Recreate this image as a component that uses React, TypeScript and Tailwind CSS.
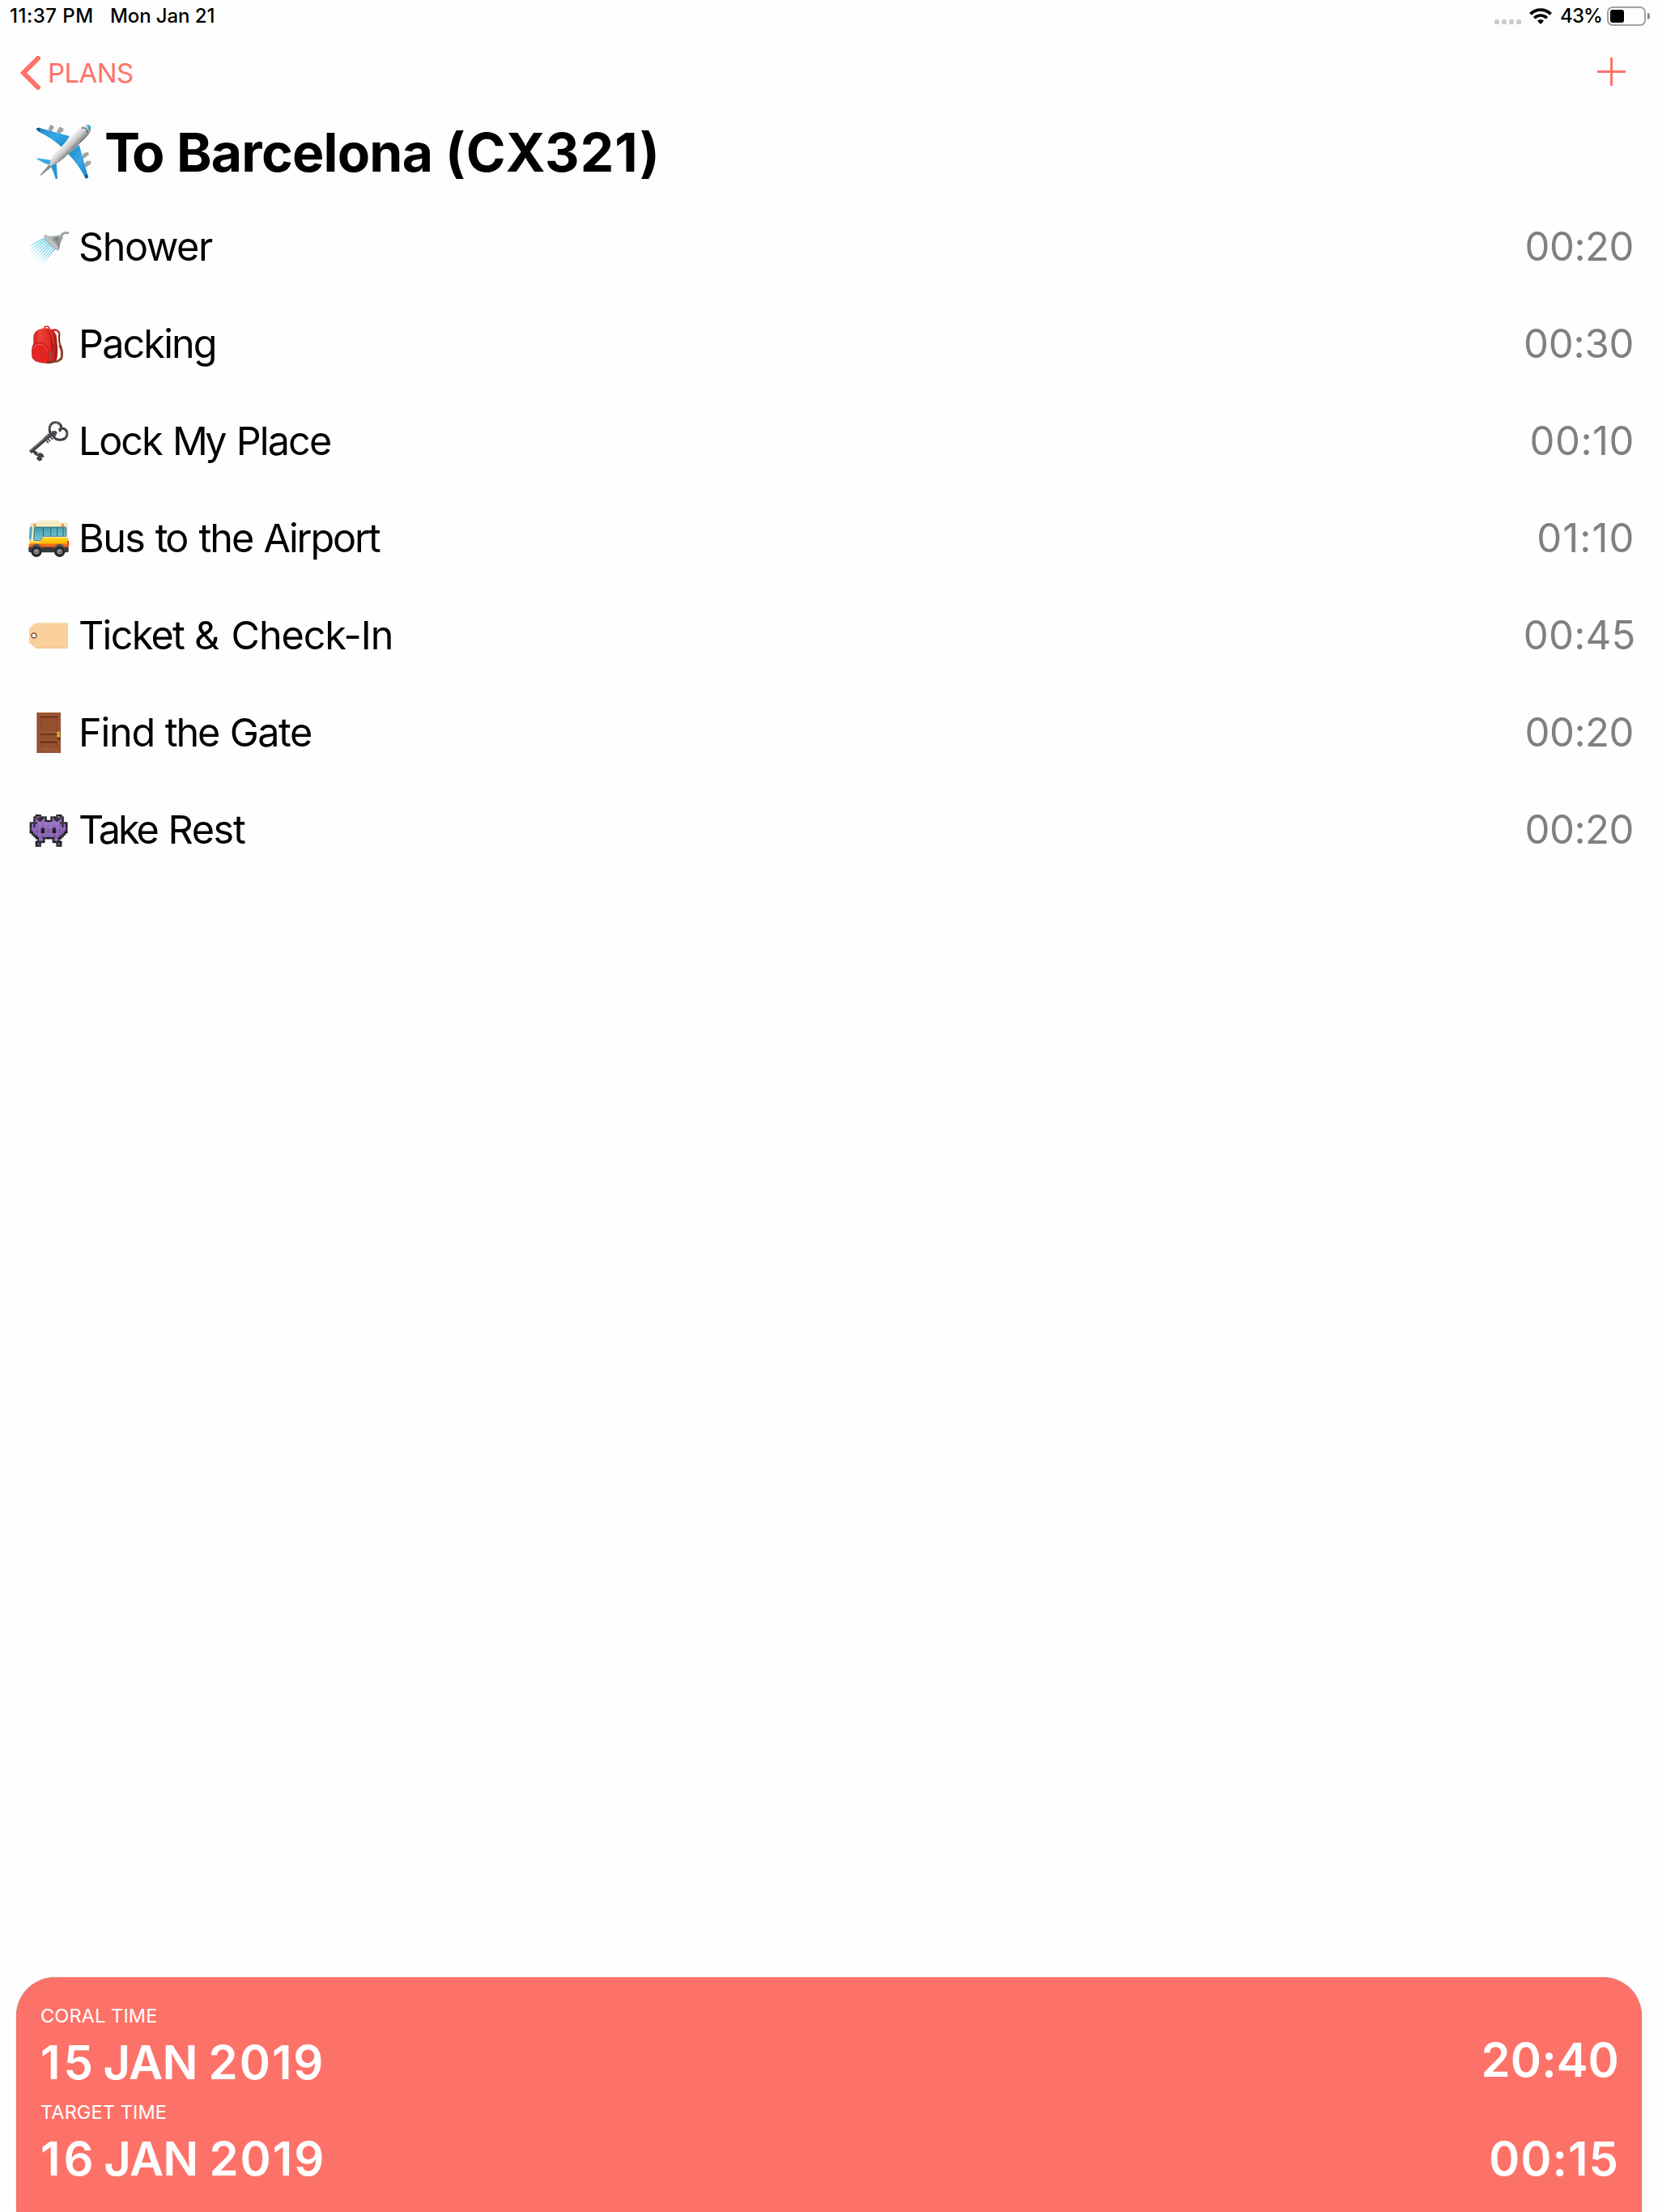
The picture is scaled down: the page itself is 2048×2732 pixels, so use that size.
import { Fragment, type ReactNode } from "react";

const rowIcon = "block size-[50px] shrink-0 overflow-visible";

function Airplane() {
  return (
    <svg viewBox="42 39 204 204" className="block size-[68px] shrink-0 overflow-visible">
      <defs>
        <linearGradient id="fuselage" gradientUnits="userSpaceOnUse" x1="140" y1="90" x2="184" y2="134">
          <stop offset="0" stopColor="#b9b9b9" />
          <stop offset="0.35" stopColor="#f0f0f0" />
          <stop offset="0.65" stopColor="#cccccc" />
          <stop offset="1" stopColor="#777777" />
        </linearGradient>
        <linearGradient id="wing" x1="0" y1="0" x2="1" y2="1">
          <stop offset="0" stopColor="#1f86c4" />
          <stop offset="0.5" stopColor="#36a8e4" />
          <stop offset="1" stopColor="#1c83c2" />
        </linearGradient>
      </defs>
      <g fill="#a3a3a3" stroke="#6f6f6f" strokeWidth="1">
        <path d="M90 59 L97 43 L109 49 L108 56 L98 67 Z" />
        <path d="M120 68 L132 50 L145 58 L143 66 L130 76 Z" />
        <path d="M212 160 L223 147 L237 145 L238 154 L219 167 Z" />
        <path d="M222 192 L231 178 L245 177 L246 187 L229 199 Z" />
      </g>
      <path d="M45 61 Q43 54 54 53 L168 85 L140 127 Q105 93 60 72 Z" fill="url(#wing)" />
      <path d="M45 61 Q43 54 54 53 L60 55 L58 70 Z" fill="#1a5f90" />
      <path d="M203 116 L237 236 Q235 243 227 241 Q201 190 163 151 Z" fill="url(#wing)" />
      <path d="M237 232 Q235 243 227 241 L222 232 L231 225 Z" fill="#1a5f90" />
      <path d="M46 166 L99 173 L93 192 Q69 184 46 169 Z" fill="#3aa8e2" />
      <path d="M101 192 L119 184 L123 242 L116 243 Q110 218 99 197 Z" fill="#2594d2" />
      <path d="M92 190 L60 226 L59 230 L64 229 L103 197 Z" fill="#8f8f8f" />
      <path d="M236 42 Q250 44 245 65 Q239 82 207 110 L151 162 Q121 190 103 192 Q91 192 98 177 Q103 155 130 131 L184 74 Q211 44 236 42 Z" fill="url(#fuselage)" />
      <path d="M231 42 Q250 42 246 61 L240 64 Q239 51 231 42 Z" fill="#2ba4e0" />
      <path d="M212 54 Q224 52 230 58 Q235 64 232 72" fill="none" stroke="#3c3c3c" strokeWidth="3" />
    </svg>
  );
}

function ShowerHead() {
  return (
    <svg viewBox="15 30 150 150" className={rowIcon}>
      <defs>
        <linearGradient id="spray" gradientUnits="userSpaceOnUse" x1="100" y1="92" x2="42" y2="150">
          <stop offset="0" stopColor="#25b9d6" />
          <stop offset="0.55" stopColor="#72d3e6" />
          <stop offset="1" stopColor="#d8f4fa" stopOpacity="0.3" />
        </linearGradient>
        <linearGradient id="steel" x1="0" y1="0" x2="1" y2="1">
          <stop offset="0" stopColor="#c9cdcd" />
          <stop offset="0.5" stopColor="#a3a7a7" />
          <stop offset="1" stopColor="#5f6464" />
        </linearGradient>
      </defs>
      <g stroke="url(#spray)" strokeWidth="3.2">
        <path d="M75 72 L22 102" />
        <path d="M79 76 L19 117" />
        <path d="M83 80 L20 129" />
        <path d="M88 85 L24 139" />
        <path d="M93 90 L31 148" />
        <path d="M98 95 L39 155" />
        <path d="M103 99 L48 161" />
        <path d="M109 105 L58 163" />
        <path d="M115 110 L68 165" />
      </g>
      <path d="M133 64 Q139 49 148 48 L165 48 L165 57 L152 57 Q144 58 141 69 Z" fill="#9a9e9e" />
      <path d="M138 58 Q143 50 150 50 L164 50" fill="none" stroke="#d4d6d6" strokeWidth="2" />
      <path d="M77 63 Q108 66 131 61 L144 70 Q130 91 130 113 Q118 119 100 100 Q76 79 77 63 Z" fill="url(#steel)" />
      <path d="M75 62 Q80 58 90 68 L120 95 Q132 108 127 117 Q117 119 98 99 Q73 77 75 62 Z" fill="#bfc3c3" stroke="#858989" strokeWidth="1.5" />
      <path d="M105 71 L130 69 L121 88 Z" fill="#7b8080" />
    </svg>
  );
}

function Backpack() {
  return (
    <svg viewBox="15 390 150 150" className={rowIcon}>
      <defs>
        <linearGradient id="bag" x1="0" y1="0" x2="1" y2="0">
          <stop offset="0" stopColor="#c81a17" />
          <stop offset="0.3" stopColor="#f0413b" />
          <stop offset="0.75" stopColor="#dc2722" />
          <stop offset="1" stopColor="#9e1511" />
        </linearGradient>
      </defs>
      <path d="M101 415 Q125 408 130 425 Q126 460 137 477 Q144 500 138 520 Q128 529 115 531" fill="none" stroke="#7b2a1b" strokeWidth="6" />
      <path d="M100 414 Q121 408 127 421" fill="none" stroke="#cf2d27" strokeWidth="6" />
      <path d="M128 470 Q141 488 136 516 Q126 528 113 531" fill="none" stroke="#9b4a2c" strokeWidth="5" />
      <path d="M74 409 Q74 398 84 399 Q94 400 93 413" fill="none" stroke="#d72a25" strokeWidth="5" />
      <path d="M34 437 Q38 408 79 406 Q110 406 119 433 L123 474 Q125 513 118 528 L88 536 Q42 531 30 516 Q25 492 34 461 Z" fill="url(#bag)" />
      <path d="M81 530 L119 524 L115 532 Q99 540 82 536 Z" fill="#75351f" />
      <path d="M29 481 Q31 458 59 459 Q86 461 90 490 L88 530 Q78 540 43 528 Q27 520 29 502 Z" fill="#e32621" stroke="#a91713" strokeWidth="2" />
      <path d="M34 481 Q39 465 60 466 Q79 468 84 491" fill="none" stroke="#f56b65" strokeWidth="2.5" />
      <path d="M83 414 Q101 427 103 464 L100 516" fill="none" stroke="#7f100d" strokeWidth="3" />
      <path d="M90 413 Q107 430 109 468" fill="none" stroke="#f0554e" strokeWidth="2" />
      <path d="M101 491 L99 514" stroke="#5c5f63" strokeWidth="5" />
    </svg>
  );
}

function OldKey() {
  return (
    <svg viewBox="15 750 150 150" className={rowIcon}>
      <path d="M102 797 L22 865" stroke="#35343a" strokeWidth="13" />
      <path d="M100 795 L22 862" stroke="#858183" strokeWidth="3.5" />
      <path d="M37 858 L50 866 L50 873 L58 866 L70 873 L74 885 L64 884 L67 893 L56 899 L45 890 L50 880 L41 877 L29 864 Z" fill="#454348" />
      <path d="M99 798 Q88 781 98 764 Q109 751 128 758 Q138 764 137 776 Q157 777 159 796 Q158 817 135 820 Q116 821 108 807 Z" fill="none" stroke="#3c3b41" strokeWidth="9" strokeLinejoin="round" />
      <path d="M97 784 Q93 766 108 759 Q124 752 134 764 M158 788 Q162 805 150 814" fill="none" stroke="#858286" strokeWidth="2.5" />
      <path d="M101 788 L112 781 Q118 789 125 795 L115 807 L105 803 Z" fill="#4c4a50" />
      <path d="M88 799 L104 817 M80 806 L95 824 M74 813 L88 830" stroke="#514e53" strokeWidth="5.5" strokeLinecap="round" />
      <path d="M105 788 Q98 775 106 768 Q117 761 128 768 Q131 775 128 784 Q135 787 145 783 Q153 787 151 799 Q147 811 133 813 Q120 813 117 803 Q124 797 122 790 Q114 783 105 788 Z" fill="#fefefe" />
      <path d="M126 778 L140 772 L138 786 L130 792 Z" fill="#454348" />
    </svg>
  );
}

function Bus() {
  return (
    <svg viewBox="15 15 150 150" className={rowIcon}>
      <defs>
        <linearGradient id="glass" x1="0" y1="0" x2="0.3" y2="1">
          <stop offset="0" stopColor="#3f93a2" />
          <stop offset="1" stopColor="#7ccbd8" />
        </linearGradient>
        <linearGradient id="stripe" x1="0" y1="0" x2="0" y2="1">
          <stop offset="0" stopColor="#ffd61c" />
          <stop offset="0.5" stopColor="#fbb804" />
          <stop offset="0.62" stopColor="#f4731a" />
          <stop offset="1" stopColor="#e74b12" />
        </linearGradient>
      </defs>
      <rect x="53" y="24" width="75" height="12" rx="4" fill="#faf3cd" stroke="#e6dcae" />
      <path d="M28 33 H154 Q160 33 160 42 V99 H18 L24 41 Q24 34 28 33 Z" fill="#f9f1c8" stroke="#cfc598" strokeWidth="1.5" />
      <path d="M20 50 Q22 45 30 46 L26 94 Q20 96 18 90 Z" fill="#4fa9bb" />
      <path d="M38 48 H152 Q155 49 155 53 V82 H71 Q67 83 64 92 Q63 98 56 98 H40 Q34 97 35 90 L37 52 Z" fill="url(#glass)" stroke="#2b626b" strokeWidth="2.5" />
      <path d="M70 48 V82 M98 48 V82 M122 48 V82 M144 48 V82" stroke="#256a75" strokeWidth="3" />
      <rect x="33" y="37" width="11" height="8" rx="2" fill="#f58a1e" />
      <rect x="137" y="37" width="11" height="8" rx="2" fill="#f58a1e" />
      <path d="M17 99 H58 Q65 98 68 87 H161 L164 100 V128 H17 Z" fill="url(#stripe)" />
      <path d="M17 103 H62" stroke="#fff0b0" strokeWidth="3" />
      <rect x="160" y="99" width="5" height="18" fill="#e8261c" />
      <rect x="15" y="100" width="5" height="12" rx="2" fill="#faf2cf" />
      <path d="M16 122 H164 V138 Q164 142 158 142 H20 Q16 141 16 136 Z" fill="#38393b" />
      <path d="M24 134 A21 23 0 0 1 66 132 Z M110 132 A21 23 0 0 1 152 134 Z" fill="#5c5755" />
      {[45, 131].map((x) => (
        <g key={x}>
          <circle cx={x} cy="139" r="20" fill="#27282a" />
          <circle cx={x} cy="139" r="10" fill="#8d9092" />
          <circle cx={x} cy="139" r="6" fill="#5d6062" />
          <circle cx={x - 1} cy="137" r="3" fill="#c3c6c8" />
        </g>
      ))}
    </svg>
  );
}

function Tag() {
  return (
    <svg viewBox="45 420 150 150" className={rowIcon}>
      <path d="M77 448 H192 V542 H77 Q71 542 66 537 L51 524 Q48 521 48 517 V473 Q48 469 51 466 L66 453 Q71 448 77 448 Z" fill="#f9cf9c" />
      <path d="M72 449 H192" stroke="#fbdcb5" strokeWidth="3" />
      <path d="M72 541 H192" stroke="#eab984" strokeWidth="2" />
      <circle cx="66" cy="495" r="9" fill="#ffffff" stroke="#84503f" strokeWidth="4" />
    </svg>
  );
}

function Door() {
  return (
    <svg viewBox="45 780 150 150" className={rowIcon}>
      <rect x="77" y="780" width="87" height="150" fill="#9a5532" />
      <path d="M78.5 780 V930 M162.5 780 V930" stroke="#7c4125" strokeWidth="3" />
      <g fill="#96502e" stroke="#7a4024" strokeWidth="2.5">
        <rect x="90" y="796" width="61" height="54" />
        <rect x="90" y="859" width="61" height="21" />
        <rect x="90" y="887" width="61" height="23" />
      </g>
      <path d="M90 797 H151 M90 861 H151 M90 890 H151" stroke="#63311a" strokeWidth="5" />
      <path d="M90 851 H151 M90 881 H151 M90 911 H151" stroke="#b06c46" strokeWidth="2" />
      <path d="M154 872 H163 V882 H156 Z" fill="#5d3018" />
      <rect x="151" y="852" width="11" height="8" fill="#e9c52b" />
      <rect x="151" y="863" width="11" height="7" fill="#f1d63d" />
      <rect x="157" y="850" width="5" height="22" fill="#c99e1b" />
    </svg>
  );
}

const invader = [
  "...KKK....",
  "..KKPKKKK.",
  "..KPKKKPK.",
  "..KPPKPPKK",
  "KKKKPPPPPP",
  "KPKPPPPPPP",
  "KPKPPPPPPP",
  "KPPPPPKKPP",
  "KPPPPPKKPP",
  "KKPPPPKKPP",
  ".KKPPPPPPP",
  "..KKPPPPPP",
  "...KKPPKKK",
  "....KPPK..",
  "...KKKKK..",
  "...KPK....",
  "...KKK....",
];

function Invader() {
  return (
    <svg viewBox="15 15 150 150" className={rowIcon}>
      {invader.flatMap((half, r) =>
        (half + [...half].reverse().join("")).split("").map((cell, c) =>
          cell === "." ? null : (
            <rect
              key={`${r}-${c}`}
              x={20 + c * 7}
              y={33 + r * 7}
              width="7.4"
              height="7.4"
              fill={cell === "K" ? "#1d1b20" : r < 7 ? "#8f66bf" : "#8058ae"}
            />
          ),
        ),
      )}
    </svg>
  );
}

function StatusBar() {
  return (
    <div className="flex h-10 items-center justify-between pr-[10px] pl-3 text-[24px] leading-10 font-medium text-black">
      <div className="flex">
        <span className="w-[124px] tracking-[0.5px]">11:37 PM</span>
        <span className="tracking-[-0.1px]">Mon Jan 21</span>
      </div>
      <div className="flex items-center">
        <div className="mt-[14px] mr-[10px] flex gap-[3px]">
          <i className="size-1.5 rounded-[2px] bg-[#c9c9c9]" />
          <i className="size-1.5 rounded-[2px] bg-[#c9c9c9]" />
          <i className="size-1.5 rounded-[2px] bg-[#c9c9c9]" />
          <i className="size-1.5 rounded-[2px] bg-[#c9c9c9]" />
        </div>
        <svg viewBox="0 0 28 20" className="mr-[10px] h-5 w-7">
          <path d="M1.4 7.4 A17.5 17.5 0 0 1 26.6 7.4" fill="none" stroke="#000" strokeWidth="3.8" />
          <path d="M6.2 12.2 A11 11 0 0 1 21.8 12.2" fill="none" stroke="#000" strokeWidth="3.6" />
          <path d="M10 15.8 Q14 12.4 18 15.8 L14 20 Z" fill="#000" />
        </svg>
        <span className="mr-[6px] tracking-[-0.9px]">43%</span>
        <div className="flex h-6 w-12 rounded-[7px] border-2 border-[#a0a0a0] p-0.5">
          <div className="h-full w-[17px] rounded-[3px] bg-black" />
        </div>
        <div className="ml-0.5 h-2 w-[3px] rounded-r-full bg-[#8c8c8c]" />
      </div>
    </div>
  );
}

function NavBar() {
  return (
    <div className="flex h-[100px] items-center justify-between pr-10 pl-[25px] text-[#fe7268]">
      <button className="flex items-center">
        <svg viewBox="0 0 26 42" className="h-[42px] w-[26px]">
          <path d="M22 3 L4 21 L22 39" fill="none" stroke="currentColor" strokeWidth="6" strokeLinecap="round" strokeLinejoin="miter" />
        </svg>
        <span className="ml-2 text-[33px] leading-10 tracking-[-0.59px]">PLANS</span>
      </button>
      <svg viewBox="0 0 35 35" className="mb-[3px] size-[35px]">
        <path d="M17.5 0 V35 M0 17.5 H35" stroke="currentColor" strokeWidth="3" />
      </svg>
    </div>
  );
}

type Word = [text: string, spacing: string];

function Words({ words }: { words: Word[] }) {
  return words.map(([text, spacing], i) => (
    <Fragment key={i}>
      {i > 0 && " "}
      <span className={spacing}>{text}</span>
    </Fragment>
  ));
}

type Step = { icon: ReactNode; name: Word[]; time: string; timeClass: string };

const steps: Step[] = [
  { icon: <ShowerHead />, name: [["Shower", "tracking-[-1.44px]"]], time: "00:20", timeClass: "mr-[4.2px] tracking-[-0.5px]" },
  { icon: <Backpack />, name: [["Packing", "tracking-[-1.85px]"]], time: "00:30", timeClass: "mr-[3.8px] tracking-[-0.2px]" },
  {
    icon: <OldKey />,
    name: [
      ["Lock", "tracking-[-2.1px]"],
      ["My", "tracking-[-4px]"],
      ["Place", "ml-[1.7px] tracking-[-1.85px]"],
    ],
    time: "00:10",
    timeClass: "mr-[3px] tracking-[0.55px]",
  },
  {
    icon: <Bus />,
    name: [
      ["Bus", "tracking-[-1.6px]"],
      ["to", "tracking-[-3px]"],
      ["the", "ml-[1.5px] tracking-[-2px]"],
      ["Airport", "ml-[-0.5px] tracking-[-2.15px]"],
    ],
    time: "01:10",
    timeClass: "mr-[2.6px] tracking-[1.05px]",
  },
  {
    icon: <Tag />,
    name: [
      ["Ticket", "tracking-[-1.7px]"],
      ["&", "ml-[-0.8px]"],
      ["Check-In", "ml-[0.6px] tracking-[-1.1px]"],
    ],
    time: "00:45",
    timeClass: "mr-[1.4px] tracking-[0.3px]",
  },
  {
    icon: <Door />,
    name: [
      ["Find", "tracking-[-1.2px]"],
      ["the", "ml-[-0.8px] tracking-[-2.2px]"],
      ["Gate", "tracking-[-1.5px]"],
    ],
    time: "00:20",
    timeClass: "mr-[4.2px] tracking-[-0.5px]",
  },
  {
    icon: <Invader />,
    name: [
      ["Take", "tracking-[-3px]"],
      ["Rest", "tracking-[-1.3px]"],
    ],
    time: "00:20",
    timeClass: "mr-[4.2px] tracking-[-0.5px]",
  },
];

function StepRow({ icon, name, time, timeClass }: Step) {
  return (
    <li className="flex h-[120px] items-center pt-0.5 pr-[26px] pl-[35px] leading-[118px]">
      {icon}
      <span className="ml-3 text-[48.5px] text-black">
        <Words words={name} />
      </span>
      <span className={`ml-auto text-[49px] text-[#808080] ${timeClass}`}>{time}</span>
    </li>
  );
}

type Moment = { label: string; date: Word[]; time: string; timeClass: string };

function MomentRow({ label, date, time, timeClass }: Moment) {
  return (
    <div className="flex items-end justify-between">
      <div>
        <div className="text-[23.5px] leading-7 tracking-[0.12px]">{label}</div>
        <div className="mt-2 text-[58px] leading-[70px] font-semibold">
          <Words words={date} />
        </div>
      </div>
      <div className={`text-[58px] leading-[70px] font-semibold ${timeClass}`}>{time}</div>
    </div>
  );
}

export default function App() {
  return (
    <div className="flex h-[2732px] w-[2048px] flex-col overflow-hidden bg-[#fefefe] font-['Inter',sans-serif]">
      <header className="h-[244px] bg-[#fdfdfd]">
        <StatusBar />
        <NavBar />
        <div className="flex h-24 items-center pl-11">
          <div className="mt-[-2px]">
            <Airplane />
          </div>
          <h1 className="ml-[17px] text-[66px] leading-[96px] font-bold text-black">
            <Words
              words={[
                ["To", "tracking-[-5px]"],
                ["Barcelona", "ml-[3.9px] tracking-[-0.76px]"],
                ["(CX321)", "tracking-[1.05px]"],
              ]}
            />
          </h1>
        </div>
      </header>
      <ul>
        {steps.map((step, i) => (
          <StepRow key={i} {...step} />
        ))}
      </ul>
      <footer className="mx-5 mt-auto flex h-[290px] flex-col gap-[13px] rounded-t-[48px] bg-[#fd7268] pt-[34px] pr-7 pl-[30px] text-white shadow-[0_0_1px_rgba(0,0,0,0.5)]">
        <MomentRow
          label="CORAL TIME"
          date={[
            ["15", "tracking-[3.85px]"],
            ["JAN", "ml-[-5.9px] tracking-[-0.87px]"],
            ["2019", "ml-[-0.6px] tracking-[1.95px]"],
          ]}
          time="20:40"
          timeClass="mb-[3px] tracking-[0.12px]"
        />
        <MomentRow
          label="TARGET TIME"
          date={[
            ["16", "tracking-[4px]"],
            ["JAN", "ml-[-5.9px] tracking-[-0.87px]"],
            ["2019", "ml-[-0.6px] tracking-[1.95px]"],
          ]}
          time="00:15"
          timeClass="tracking-[1px]"
        />
      </footer>
    </div>
  );
}
